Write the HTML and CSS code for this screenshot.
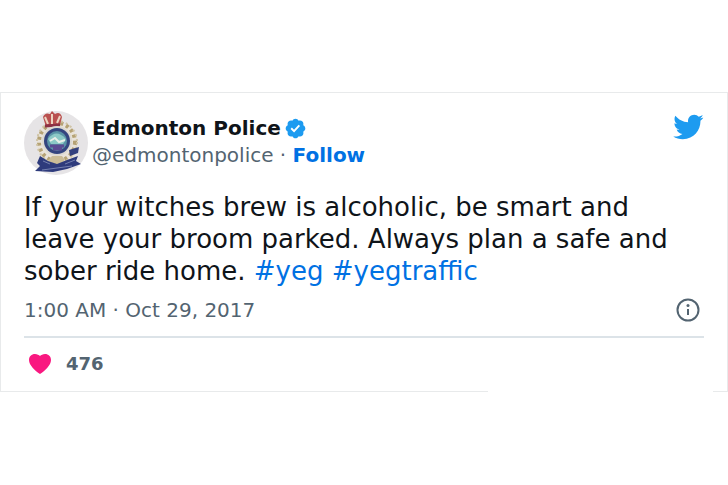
FILE: index.html
```html
<!DOCTYPE html>
<html lang="en">
<head>
  <meta charset="UTF-8">
  <meta name="viewport" content="width=device-width, initial-scale=1.0">
  <title>Edmonton Police on Twitter</title>
  <link rel="stylesheet" href="styles.css">
</head>
<body>
  <article class="tweet">
    <header class="tweet-header">
      <!-- Police crest avatar -->
      <svg class="avatar" viewBox="0 0 64 64" role="img" aria-label="Edmonton Police crest">
        <circle cx="32" cy="32" r="32" fill="#e6e4e6"/>
        <path d="M17 17 Q8 32 18 48 L28 54 H39 L50 46 Q59 30 47 17 L33 11Z" fill="#e9e3d9"/>
        <ellipse cx="33" cy="31" rx="18" ry="19" fill="none" stroke="#b5a274" stroke-width="4" stroke-dasharray="3 3"/>
        <ellipse cx="33" cy="31" rx="20" ry="21" fill="none" stroke="#cfc4a6" stroke-width="2" stroke-dasharray="2 3"/>
        <path d="M19 6 Q21 1 26 3 L28 0 L31 3 Q36 0 38 6 L36 14 L22 16Z" fill="#b9504f"/>
        <path d="M21 6 L24 13 M28 3 V13 M36 5 L33 12" stroke="#edd3c0" stroke-width="2" fill="none"/>
        <path d="M21 15 L36 14" stroke="#8c3044" stroke-width="3"/>
        <circle cx="33" cy="30" r="15" fill="#dcd9d2"/>
        <circle cx="33" cy="30" r="13" fill="#34457f"/>
        <circle cx="33" cy="30" r="10" fill="#5a94a6"/>
        <path d="M24 28 Q32 17 42 28 L39 33 H27Z" fill="#8cc9c6"/>
        <path d="M26 30 L31 27 L35 31 L41 29" stroke="#e9eee8" stroke-width="2" fill="none"/>
        <path d="M26 35 H40 M29 38 H38" stroke="#5c4a92" stroke-width="3"/>
        <path d="M24 50 L28 45 H38 L41 49 L34 54Z" fill="#cbbd97"/>
        <path d="M16 45 L24 50 L33 53 L43 49 L54 45 L52 50 L57 53 L43 58 L29 61 L11 60 L16 55 L13 52Z" fill="#2e3b7c"/>
        <path d="M19 50 L26 53 M41 53 L51 49 M18 59 L48 55" stroke="#7480b0" stroke-width="1" fill="none"/>
        <path d="M45 39 L55 36 L54 42 L46 45Z" fill="#34417e"/>
      </svg>
      <div class="author">
        <div class="author-name">
          <a href="#">Edmonton Police</a>
          <svg class="verified" viewBox="0 0 24 24" role="img" aria-label="Verified account">
            <path fill="#1d9bf0" d="M22.25 12c0-1.43-.88-2.67-2.19-3.34.46-1.39.2-2.9-.81-3.91s-2.52-1.27-3.91-.81c-.66-1.31-1.91-2.19-3.34-2.19s-2.67.88-3.33 2.19c-1.4-.46-2.91-.2-3.92.81s-1.26 2.52-.8 3.91c-1.31.67-2.2 1.91-2.2 3.34s.89 2.67 2.2 3.34c-.46 1.39-.21 2.9.8 3.91s2.52 1.26 3.91.81c.67 1.31 1.91 2.19 3.34 2.19s2.68-.88 3.34-2.19c1.39.45 2.9.2 3.91-.81s1.27-2.52.81-3.91c1.31-.67 2.19-1.91 2.19-3.34z"/>
            <path fill="#fff" d="M10.54 16.2 6.8 12.46l1.41-1.42 2.26 2.26 4.8-5.23 1.47 1.36z"/>
          </svg>
        </div>
        <div class="author-handle">
          <a href="#">@edmontonpolice</a> · <a class="follow" href="#">Follow</a>
        </div>
      </div>
      <a class="logo" href="#" aria-label="View on Twitter">
        <svg viewBox="0 0 24 24" aria-hidden="true">
          <path fill="#1d9bf0" d="M23.643 4.937c-.835.37-1.732.62-2.675.733.962-.576 1.7-1.49 2.048-2.578-.9.534-1.897.922-2.958 1.13-.85-.904-2.06-1.47-3.4-1.47-2.572 0-4.658 2.086-4.658 4.66 0 .364.042.718.12 1.06-3.873-.195-7.304-2.05-9.602-4.868-.4.69-.63 1.49-.63 2.342 0 1.616.823 3.043 2.072 3.878-.764-.025-1.482-.234-2.11-.583v.06c0 2.257 1.605 4.14 3.737 4.568-.392.106-.803.162-1.227.162-.3 0-.593-.028-.877-.082.593 1.85 2.313 3.198 4.352 3.234-1.595 1.25-3.604 1.995-5.786 1.995-.376 0-.747-.022-1.112-.065 2.062 1.323 4.51 2.093 7.14 2.093 8.57 0 13.255-7.098 13.255-13.254 0-.2-.005-.402-.014-.602.91-.658 1.7-1.477 2.323-2.41z"/>
        </svg>
      </a>
    </header>

    <p class="tweet-text">If your witches brew is alcoholic, be smart and leave your broom parked. Always plan a safe and sober ride home. <a href="#">#yeg</a> <a href="#">#yegtraffic</a></p>

    <div class="tweet-info">
      <a href="#">1:00 AM · Oct 29, 2017</a>
      <a class="info" href="#" aria-label="Twitter Ads info and privacy">
        <svg viewBox="0 0 24 24" aria-hidden="true">
          <circle cx="12" cy="12" r="10.500" fill="none" stroke="#536471" stroke-width="2"/>
          <circle cx="12" cy="7.500" r="1.500" fill="#536471"/>
          <path d="M12 11v6" stroke="#536471" stroke-width="2"/>
        </svg>
      </a>
    </div>

    <div class="tweet-actions">
      <button class="like" type="button" aria-label="Like, 476 likes">
        <svg viewBox="0 0 24 24" aria-hidden="true">
          <path fill="#f91880" d="M12 22 C7 19 1 13 1 8 C1 4.500 3.500 2 7 2 C9.200 2 11 3 12 4 C13 3 14.800 2 17 2 C20.500 2 23 4.500 23 8 C23 13 17 19 12 22Z"/>
        </svg>
        <span>476</span>
      </button>
    </div>
  </article>
</body>
</html>
```
FILE: styles.css
```css
* {
  box-sizing: border-box;
  margin: 0;
  padding: 0;
}

body {
  min-height: 100vh;
  display: flex;
  align-items: center;
  padding-bottom: 1px;
  background-color: #fff;
  font-family: "DejaVu Sans", sans-serif;
  color: #0f1419;
}

a {
  color: inherit;
  text-decoration: none;
}

svg {
  display: block;
}

/* Tweet card */
.tweet {
  position: relative;
  width: 100%;
  padding: 18px 23px 13px;
  border: 1px solid #e8eaeb;
}

/* The bottom border is open near the right corner */
.tweet::after {
  content: "";
  position: absolute;
  right: 14px;
  bottom: -1px;
  width: 31%;
  height: 1px;
  background-color: #fff;
}

/* Header */
.tweet-header {
  display: flex;
  align-items: flex-start;
}

.avatar {
  width: 64px;
  height: 64px;
  margin-right: 4px;
}

.author {
  flex: 1;
  padding-top: 4px;
  font-size: 20px;
  line-height: 27px;
}

.author-name {
  display: flex;
  align-items: center;
  gap: 3px;
  font-weight: bold;
}

.verified {
  width: 23px;
  height: 23px;
}

.author-handle {
  color: #536471;
}

.follow {
  color: #0071e3;
  font-weight: bold;
}

.logo svg {
  width: 32px;
  height: 32px;
}

/* Text */
.tweet-text {
  margin-top: 16px;
  font-size: 26px;
  line-height: 32px;
}

.tweet-text a {
  color: #0071e3;
}

/* Date row */
.tweet-info {
  display: flex;
  justify-content: space-between;
  align-items: center;
  padding: 9px 0 12px;
  border-bottom: 2px solid #dce3e8;
  color: #536471;
  font-size: 20px;
  line-height: 28px;
}

.info {
  padding: 0 4px;
}

.info svg {
  width: 24px;
  height: 24px;
}

/* Actions */
.tweet-actions {
  padding-top: 12px;
}

.like {
  display: flex;
  align-items: center;
  gap: 14px;
  padding-left: 4px;
  border: none;
  background: none;
  color: #536471;
  font-family: inherit;
  font-size: 18px;
  font-weight: bold;
  line-height: 28px;
  cursor: pointer;
}

.like svg {
  width: 24px;
  height: 24px;
}
```
